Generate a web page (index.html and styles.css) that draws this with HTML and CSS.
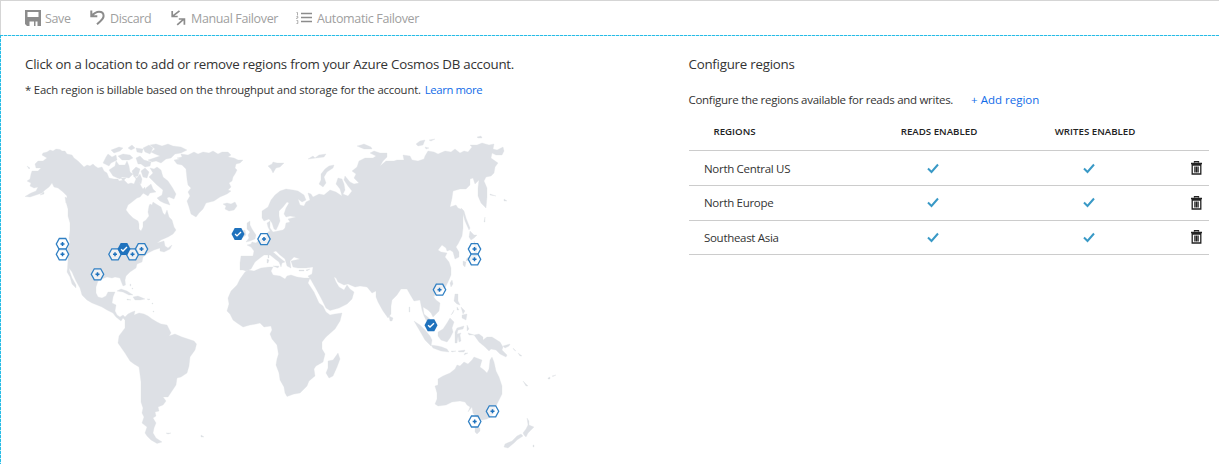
FILE: index.html
```html
<!DOCTYPE html>
<html lang="en">
<head>
<meta charset="utf-8">
<title>Replicate data globally</title>
<link rel="stylesheet" href="styles.css">
</head>
<body>
<div class="toolbar">
  <button class="cmd save"><svg width="16" height="16" viewBox="0 0 16 16"><path fill="#8c8c8c" fill-rule="evenodd" d="M0 0h16v16h-3.500v-4.500h-2V16H9v-4.500H4.500V16H2L0 14zM2.500 2v5h11V2z"/></svg><span>Save</span></button>
  <button class="cmd discard"><svg width="15" height="16" viewBox="0 0 15 16"><path d="M1.300.5v5.800h6M1.600 6C4 3.300 6.500 1.800 9 1.800c3 0 4.600 1.800 4.600 4.200 0 2.300-1.500 3.700-3.500 5.400L7 14.200" fill="none" stroke="#8c8c8c" stroke-width="2"/></svg><span>Discard</span></button>
  <button class="cmd manual"><svg width="15" height="16" viewBox="0 0 15 16"><path d="M8.500.8L1.700 6.200M1.200 1v5.500h5.500M6.200 14.800l6.300-5.400M7.800 9h5.600v5.800" fill="none" stroke="#8c8c8c" stroke-width="1.700"/></svg><span>Manual Failover</span></button>
  <button class="cmd auto"><svg width="16" height="14" viewBox="0 0 16 14"><path d="M5 2.500h11M5 6.500h11M5 10.500h11" stroke="#8c8c8c" stroke-width="1.300"/><path d="M.5 1.500h1v3M.5 5.500h1.300V7H.7v1M.5 9.500h1.300v3H.5" fill="none" stroke="#999" stroke-width=".8"/></svg><span>Automatic Failover</span></button>
</div>
<main class="content">
  <section class="locations">
    <h1 class="title">Click on a location to add or remove regions from your Azure Cosmos DB account.</h1>
    <p class="note"><span>* Each region is billable based on the throughput and storage for the account.</span> <a>Learn more</a></p>
    <svg class="map" width="540" height="325" viewBox="20 130 540 325">
      <defs>
        <g id="add"><path class="ring" d="M-3.200-5.500h6.400L6.200 0 3.200 5.500h-6.400L-6.200 0z"/><path class="plus" d="M-2 0h4M0-2v4"/></g>
        <g id="on"><path fill="#1f72bd" d="M-3.300-6h6.600L6.500 0 3.300 6h-6.600L-6.500 0z"/><path class="tick" d="M-2.900.1l1.900 1.800L3-2"/></g>
      </defs>
      <g class="land">
        <!-- North America -->
        <path d="M43 153L47 152 50 150 53 151 56 149 60 149.500 62 151 65 151 67 154 72 155 74 158 78 161 81 164 84 167 87 165 90 166 93 164 95 166 98 168 102 167 104 171 107 173 109 178 114 179 118 179 119 181 124 180 128 184 131 183 134 184 136 179 134 176 138 179 141 186 143 189 145 187 145 191 140 197 137 198 132 202 128 205 126 210 129 214 133 218 138 221 139 224 139 229 141 231 143 227 143 222 146 220 149 216 148 212 149 206 150 204 152 205 153 202 156 204 161 207 163 213 165 215 167 210 169 217 172 220 174 227 176 230 173 234 168 237 161 240 157 243 164 241 165 246 168 248 172 245 170 249 164 252 160 251 160 248 154 250 148 253 143 257 142 262 137 264 136 268 130 272 126 276 125 280 125.500 285 123 286 121 281 120 278 115 277 112 278 107 277 102 279 98 281 96 287 96 293 98 297 102 298 106 296 108 292 115 292 113 297 112 303 116 305 115 311 117 315 120 317 123 315 127 319 126 321 123 318 121 321 116 317 113 313 107 310 102 307 97 305 92 303 87 300 82 295 80 288 76 281 72 272 69 268 69.500 271 72 278 76 285 76 288 72 284 70 277 67 272 67.500 268 68 260 67 250 70 243 69 238 70 231 70 223 68 216 68 209 66 202 67 196 63 192 58 188 54 187 52 183 49 187 45 190 42 193 36 195 30 197 25 196.500 31 193 36 191 38 187 34 188 30 186 31 183 27 181 30 179 31 174 32 171 38 171 41 168 36 168 35 164 38 161 43 161 47 158 42 155zM40 195L44 192 44 194zM27 166L30 168 29 169zM65 197L68 199 66 203z"/>
        <!-- Canadian islands -->
        <path d="M103 163L106 157 108 154 112 157 116 155 117 160 111 163 109 166zM109 170L115 166 116 161 119 165 125 165 127 161 129 166 130 172 133 174 129 178 122 177 120 179 113 176zM111 150L119 147 123 148 120 151 114 153zM118 156L123 154 130 155 133 158 129 160 122 160zM128 148L132 145 135 148 131 150zM136 148L143 149 142 153 137 152zM136 158L140 156 144 160 151 162 150 166 145 167 141 164 138 164zM132 171L136 167 140 169 138 176 134 177zM136 179L140 174 142 179 141 184zM141 171L145 168 149 172 147 178 143 177zM143 148L149 145 153 148 150 154 145 152zM150 145L156 144 162 146 168 144 173 146 181 147 187 150 181 153 175 154 171 158 166 159 161 163 156 161 152 162 148 160 154 158 160 156 155 154 151 152 155 149zM150 168L154 169 157 167 161 170 163 177 168 181 172 187 176 194 174 199 169 197 167 198 170 205 164 203 160 201 157 198 162 195 163 190 157 185 152 180 149 177 153 173zM146 188L151 184 153 189 156 192 150 193 148 196 143 193zM121 178L126 178 123 181z"/>
        <!-- Greenland and Iceland -->
        <path d="M174 160L180 159 177 158 182 157 181 154 188 155 194 152 198 154 203 152 209 153 213 151 218 154 222 152 228 152 231 155 228 157 234 158 238 160 243 160 240 163 236 164 235 168 237 170 235 174 233 177 232 181 229 183 231 187 228 190 231 191 227 194 220 197 214 201 206 203 203 209 199 213 196 217 191 214 189 207 187 201 190 196 188 192 191 188 188 185 187 179 186 169 182 165 177 164zM223 204L227 203 231 204 235 202 237 206 234 210 229 211 225 209 226 206z"/>
        <!-- Caribbean -->
        <path d="M117 291L121 289 127 291 133 295 129 295 123 292zM133 297L138 296 145 299 140 300 135 300zM127 299L131 300 127 300zM147 299L150 299 149 300zM130 284h.7v2h-.7zM132 288h.7v1h-.7zM152 303h.8v1h-.8zM153 311h.8v1h-.8z"/>
        <!-- South America -->
        <path d="M125 317L128 314 132 312 135 311 134 315 139 313 144 314 148 316 152 319 157 322 161 324 167 325 171 333 169 336 175 334 182 337 188 339 194 341 196.500 344 195 350 190 357 189 366 187 373 181 377 177 378 176 385 172 391 168 397 163 397 166 401 163 405 158 407 159 411 155 412 156 416 153 418 156 423 154 428 153 433 156 438 162 442 157 443.500 151 440 147 436 145 433 147 427 142 423 144 417 142 413 143 408 141 402 141 393 141 382 139 367 134 364 130 361 125 353 118 343 119 336 125 328 125 322zM166 433L171 433 168 434zM201 435L204 437 201 437z"/>
        <!-- Africa -->
        <path d="M245 272L248 270 254 271 261 268 269 267 273 267 271 271 273 275 280 276 285 279 287 276 291 275 297 277 304 278 310 278 308 283 314 292 319 303 323 306 326 312 330 315 335 314 342 313 340 321 335 329 326 337 322 342 322 349 325 354 323 362 316 366 314 369 315 376 309 381 307 386 300 393 294 394 287 396.500 285 393 284 387 280 380 279 373 276 365 277 359 278.500 354 277 345 272 339 270 334 272 330 271 326 264 327 260 323 256 324 250 325 243 327 237 323 233 320 230 314 227 311 229 304 228 298 231 291 237 285 240 279zM338 353L340 359 337 367 333 376 329 378 326 373 328 368 328 361 333 360z"/>
        <!-- Europe and Asia -->
        <path d="M241 256L247 256 253 256 254 251 251 247 247 245 251 244 252 242 256 243 259 240 263 238 266 236 268 232 270 231 268 227 267 223 270 221 270 228 273 232 278 231 283 230 285 228 286 223 290 222 288 219 296 217 290 216 286 217 284 214 286 208 289 203 287 202 283 207 279 211 279 216 280 221 278 226 276 230 274 229 272 223 269 219 264 221 262 218 262 211 268 207 271 200 275 195 280 191 286 189 293 190 298 191 304 195 306 200 302 202 298 199 300 205 304 206 306 202 310 200 308 193 311 194 313 197 319 194 324 195 330 190 336 192 342 196 340 189 336 184 338 178 342 179 344 184 345 190 343 194 348 196 352 191 348 186 344 180 345 176 350 182 354 184 359 183 354 178 356 174 352 171 357 167 359 161 365 158 373 158 376 156 370 153 374 151 380 153 387 153 387 157 383 161 380 166 386 161 394 161 397 160 404 160 403 155 410 156 412 160 418 161 424 159 425 156 428 151 434 152 438 154 445 151 451 152 455 149 460 153 464 151 468 152 472 147 470 145 477 145 482 143 489 145 494 144 493 149 497 150 503 147 504 151 502 155 496 155 492 153 491 158 498 163 495 167 494 173 491 176 486 177 484 181 487 188 487 197 486 208 481 203 478 196 478 188 479 180 475 184 473 178 470 179 470 185 466 189 460 189 453 191 452 198 450 207 456 205 458 208 463 210 463 218 463 228 462 236 458 244 456 247 459 252 459 257 455 259 453 252 450 250 447 251 446 248 442 245 438 250 441 252 447 253 445 257 449 262 451 268 451 275 448 282 445 288 439 292 433 296 436 300 440 303 439 311 433 317 431 313 428 310 423 307 424 314 430 319 432 326 427 322 424 316 422 310 420 300 414 301 411 296 407 289 401 289 397 295 392 300 391 306 391 314 388 318 383 311 378 302 376 297 376 291 372 293 367 287 360 286 355 287 348 284 344 285 338 282 336 278 334 277 336 282 339 287 344 290 347 285 350 289 354 292 352 299 347 304 339 308 330 310.500 326 308 321 298 315 287 311 280 308 276 312 274 313 267 306 268 298 268 293 267 291 261 300 259 294 257 290 261 291 268 287 266 285 259 280 255 276 251 273 252 280 258 285 262 282 263 281 267 279 262 275 259 270 255 264 255 260 258 255 262 251 269 246 271 243 270 240 270 240 263z"/>
        <!-- Islands around Europe and the Arctic -->
        <path d="M247 223L250 221 250 225 252 229 256 235 255 239 250 241 246 242 249 238 248 235 250 232 247 229zM241 231L245 230 246 235 242 238zM273 266L279 266 278 268zM267 259L269 260 268 263 267 263zM268 255h1v3h-1zM299 270h5v1h-5zM306 270L310 269 307 271zM268 166L272 164 273 162 277 163 284 163 280 167 276 168 273 173 271 169zM308 159L313 156 315 158 319 155 326 154 324 157 316 158zM334 165L333 168 327 172 324 177 326 183 323 187 319 184 321 180 321 174 325 169 329 166zM357 146L361 145 364 144 371 147 372 149 364 149zM416 144L420 141 425 140 423 145 418 146zM425 147L429 148 426 149zM429 140L435 139 431 141zM477 137L481 136 482 138 478 138zM490 194L496 196 490 195zM504 199L507 201 504 201z"/>
        <!-- Sakhalin, Japan, Taiwan, Philippines -->
        <path d="M461 208L464 211 466 218 470 228 469 230 465 221 463 214zM470 231L474 235 477 235 474 238 471 240 469 237zM474 241L477 247 477 256 471 260 466 261 467 258 473 256 475 250zM463 261L466 262 465 267 463 265zM469 260L472 260 470 262zM452 280L453 284 451 287 450 283zM389 316L393 318 392 321 390 321zM455 294L458 294 458 301 460 305 457 304 454 301zM461 307L465 311 463 314zM462 315L467 314 466 320 462 318zM457 307L459 310 457 310zM451 315L454 310 453 313zM484 222L485 217 485 222zM432 294L435 294 434 297z"/>
        <!-- Indonesia, New Guinea, Pacific -->
        <path d="M414 321L420 325 425 330 430 336 432 340 431 346 425 340 421 333zM431 345L438 346 442 347 447 349 449 352 441 351 433 348zM438 332L443 329 447 323 450 318 454 322 452 328 453 332 450 338 447 342 441 340 438 336zM455 332L457 328 464 326 463 329 458 330 457 334 461 333 460 335 461 341 459 342 458 336 457 343 455 343zM467 325L469 329 467 331zM468 333L474 335 469 335zM451 351L456 351 452 352zM458 351L465 350 464 352 459 352zM468 353L464 355 465 353zM474 335L479 334 483 337 483 340 487 337 492 337 500 342 503 347 502 350 507 355 506 357 500 354 496 350 491 349 489 351 485 347 479 342zM503 346L510 344 509 346 505 348zM513 348L516 351 514 350zM518 353L522 356 520 356zM523 381L528 386 526 386zM548 378L550 377 550 379 548 379zM552 376L556 375 553 376.500zM409 307h.8v5h-.8z"/>
        <!-- Australia and New Zealand -->
        <path d="M438 379L443 376 450 373 455 369 457 365 460 366 464 362 468 364 472 360 474 357 482 360 480 367 484 370 487 373 489 369 490 360 492 357 494 362 496 371 499 377 502 386 502 394 498 402 494 410 492 416 487 419 482 420 477 418 473 413 472 407 468 412 470 407 467 405 465 402 460 401 452 402 446 405 438 406 435 404 437 399 437 393 435 386 438 385zM475 427L480 428 480 431 477 434 475 432zM527 418L529 421 529 425 534 427 531 430 528 433 526 437 524 435 523 433 526 429 528 425zM521 434L523 436 517 440 514 443 508 448 504 447 505 444 512 441 517 436zM533 445h1v2h-1z"/>
      </g>
      <g class="pins">
        <use href="#add" x="62.500" y="244"/><use href="#add" x="62.500" y="254.300"/>
        <use href="#add" x="97.500" y="274.300"/><use href="#add" x="115" y="254.300"/>
        <use href="#add" x="132.500" y="254.300"/><use href="#add" x="141.500" y="249.100"/>
        <use href="#on" x="124" y="249.100"/><use href="#on" x="238" y="234"/>
        <use href="#add" x="264" y="239.100"/><use href="#add" x="474.500" y="249.100"/>
        <use href="#add" x="474.500" y="259.300"/><use href="#add" x="439.500" y="289.700"/>
        <use href="#on" x="431" y="325.200"/><use href="#add" x="492.500" y="411.300"/>
        <use href="#add" x="474.700" y="421.500"/>
      </g>
    </svg>
  </section>
  <section class="regions">
    <h2 class="title">Configure regions</h2>
    <p class="desc"><span>Configure the regions available for reads and writes.</span><a>+ Add region</a></p>
    <div class="row head"><span class="c0"><b>REGIONS</b></span><span><b>READS ENABLED</b></span><span><b>WRITES ENABLED</b></span><span></span></div>
    <div class="row"><span class="name">North Central US</span><span><svg class="check" viewBox="0 0 12 11"><path d="M1 5.500L4.500 9 11 1.500"/></svg></span><span><svg class="check" viewBox="0 0 12 11"><path d="M1 5.500L4.500 9 11 1.500"/></svg></span><span><svg class="bin" viewBox="0 0 11 14"><path d="M3.500 1.500V.5h4v1M0 2.500h11M1.200 4h8.600v9H1.200zM3.900 5.500v6M5.500 5.500v6M7.100 5.500v6"/></svg></span></div>
    <div class="row mid"><span class="name">North Europe</span><span><svg class="check" viewBox="0 0 12 11"><path d="M1 5.500L4.500 9 11 1.500"/></svg></span><span><svg class="check" viewBox="0 0 12 11"><path d="M1 5.500L4.500 9 11 1.500"/></svg></span><span><svg class="bin" viewBox="0 0 11 14"><path d="M3.500 1.500V.5h4v1M0 2.500h11M1.200 4h8.600v9H1.200zM3.900 5.500v6M5.500 5.500v6M7.100 5.500v6"/></svg></span></div>
    <div class="row last"><span class="name">Southeast Asia</span><span><svg class="check" viewBox="0 0 12 11"><path d="M1 5.500L4.500 9 11 1.500"/></svg></span><span><svg class="check" viewBox="0 0 12 11"><path d="M1 5.500L4.500 9 11 1.500"/></svg></span><span><svg class="bin" viewBox="0 0 11 14"><path d="M3.500 1.500V.5h4v1M0 2.500h11M1.200 4h8.600v9H1.200zM3.900 5.500v6M5.500 5.500v6M7.100 5.500v6"/></svg></span></div>
  </section>
</main>
</body>
</html>
```
FILE: styles.css
```css
* { box-sizing: border-box; }
body { margin: 0; height: 464px; overflow: hidden; background: #fff; color: #333; font-family: "Open Sans", "Noto Sans", sans-serif; font-size: 12px; white-space: nowrap; }
h1, h2, p { margin: 0; font-weight: 400; }
.toolbar { display: flex; height: 35px; padding-left: 24px; border-top: 1px solid #d5d5d5; border-left: 1px solid #d5d5d5; }
.cmd { display: flex; align-items: center; gap: 5px; padding: 0; border: 0; background: none; color: #a0a0a0; font: inherit; font-size: 12.500px; letter-spacing: -.36px; height: 34px; text-align: left; }
.save { width: 65px; gap: 4px; }
.save svg { margin-top: -1px; }
.discard { width: 81px; }
.manual { width: 125px; }
.content {
  display: flex;
  height: 429px;
  padding: 1px 0 0 1px;
  background:
    repeating-linear-gradient(90deg, #27bce6 0 3px, #c4edf8 3px 4px) top left / 100% 1px no-repeat,
    repeating-linear-gradient(180deg, #27bce6 0 3px, #c4edf8 3px 4px) top left / 1px 100% no-repeat;
}
.locations { width: 664px; padding: 17px 0 0 24px; }
.regions { width: 544px; padding: 17px 0 0 23.500px; }
.title { height: 22px; line-height: 22px; font-size: 13.300px; letter-spacing: -.23px; }
.note { height: 16px; margin-top: 7px; line-height: 16px; font-size: 11.300px; letter-spacing: -.17px; display: flex; gap: 4px; }
a { color: #0f6be8; }
.note a { letter-spacing: -.38px; }
.map { display: block; margin: 32px 0 0 -5px; }
.land { fill: #dde0e5; stroke: #dde0e5; stroke-width: .3; }
.ring { fill: #fff; fill-opacity: .55; stroke: #2f7fc3; stroke-width: 1.300; }
.plus { fill: none; stroke: #1f72bd; stroke-width: 1.500; }
.tick { fill: none; stroke: #fff; stroke-width: 1.400; }
.desc { height: 18px; margin-top: 16px; line-height: 18px; font-size: 11.500px; display: flex; gap: 18px; }
.desc span { letter-spacing: -.28px; }
.row { display: grid; grid-template-columns: 166px 156px 156px 42px; height: 35px; width: 520px; align-items: center; border-bottom: 1px solid #ccc; font-size: 11.500px; }
.row > span { display: flex; justify-content: center; }
.row > span:last-child { padding-left: 18px; }
.row > .name, .row > .c0 { justify-content: flex-start; padding-left: 15.500px; letter-spacing: -.3px; }
.row > .c0 { padding-left: 25px; letter-spacing: 0; }
.head { height: 42px; padding-top: 3px; font-size: 9.700px; color: #222; }
.head > span:nth-child(n+2) { padding-left: 13px; }
.head b { font-weight: 600; }
.mid { height: 34.500px; }
.last { height: 34.500px; }
.check { width: 12px; height: 11px; fill: none; stroke: #3999c6; stroke-width: 2; }
.bin { width: 11px; height: 14px; fill: none; stroke: #222; stroke-width: 1.300; }
```
